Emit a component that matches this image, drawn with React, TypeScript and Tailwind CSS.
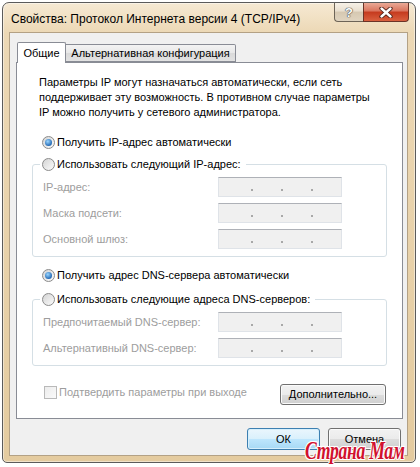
import React from "react";

function Radio({ checked }: { checked?: boolean }) {
  return (
    <span className="w-[13px] h-[13px] rounded-full border border-[#8b8b8b] bg-[linear-gradient(135deg,#d4d4d4,#fbfbfb)] flex items-center justify-center shrink-0">
      {checked && (
        <span className="w-[7px] h-[7px] rounded-full bg-[radial-gradient(circle_at_40%_35%,#9ad6ff,#1d63b0_75%)]" />
      )}
    </span>
  );
}

function IpBox() {
  return (
    <div className="w-[124px] h-[20px] border border-[#dfe3e8] border-t-[#aeb1b7] bg-[#f0f0f0] flex items-center pl-[32px] gap-[28px]">
      <span className="w-[2px] h-[2px] bg-[#a8a8a8] mt-[6px]" />
      <span className="w-[2px] h-[2px] bg-[#a8a8a8] mt-[6px]" />
      <span className="w-[2px] h-[2px] bg-[#a8a8a8] mt-[6px]" />
    </div>
  );
}

function FieldRow({ label }: { label: string }) {
  return (
    <div className="flex items-center h-[20px]">
      <span className="w-[175px] text-[#9d9d9d] whitespace-nowrap">{label}</span>
      <IpBox />
    </div>
  );
}

function Group({ legend, rows }: { legend: string; rows: string[] }) {
  return (
    <fieldset className="mx-[15px] border border-[#d5dfe5] rounded-[3px]">
      <legend className="ml-[7px] pl-[2px] pr-[5px]">
        <div className="flex items-center h-[20px] gap-[2px] whitespace-nowrap">
          <Radio />
          <span>{legend}</span>
        </div>
      </legend>
      <div className="pt-[3px] pb-[7px] pl-[10px] flex flex-col gap-[6px]">
        {rows.map((r) => (
          <FieldRow key={r} label={r} />
        ))}
      </div>
    </fieldset>
  );
}

function Btn({
  children,
  primary,
  className,
}: {
  children: React.ReactNode;
  primary?: boolean;
  className?: string;
}) {
  const base =
    "rounded-[3px] border flex items-center justify-center text-black whitespace-nowrap ";
  const look = primary
    ? "border-[#3c7fb1] bg-[linear-gradient(#eaf6fd_0%,#d9f0fc_50%,#bee6fd_50%,#a7d9f5_100%)] shadow-[inset_0_0_0_1px_#d6effc]"
    : "border-[#707070] bg-[linear-gradient(#f2f2f2_0%,#ebebeb_50%,#dddddd_50%,#cfcfcf_100%)] shadow-[inset_0_0_0_1px_#fbfbfb]";
  return <div className={base + look + " " + (className ?? "")}>{children}</div>;
}

export default function App() {
  return (
    <div className="relative w-[420px] h-[467px] overflow-hidden bg-white pt-[2px] pl-[2px] font-['Liberation_Sans',Arial,sans-serif] text-[11px] leading-[15px] text-black">
      <div className="w-[414px] h-[461px] rounded-t-[7px] rounded-b-[5px] border border-[#5b5b5b] bg-[linear-gradient(#f6e9d3_0px,#ecd8b5_30px,#e4cb9f_100%)] shadow-[inset_0_0_0_1px_rgba(255,255,255,0.45)] flex flex-col">
        {/* title bar */}
        <div className="h-[29px] flex justify-between pl-[8px] pr-[6px]">
          <div className="pt-[9px] text-[12px] text-black whitespace-nowrap">
            Свойства: Протокол Интернета версии 4 (TCP/IPv4)
          </div>
          <div className="flex items-start">
            <div className="w-[29px] h-[19px] rounded-bl-[4px] border border-[#6d6457] border-t-0 border-r-0 bg-[linear-gradient(#f7f1e7,#e9dfcf_45%,#d6c8b1_50%,#e0d4c0)] flex items-center justify-center text-white font-bold text-[13px] [text-shadow:0_0_1px_#444,0_0_1px_#444,0_0_1px_#444]">
              ?
            </div>
            <div className="w-[46px] h-[19px] rounded-br-[4px] border border-[#6b3327] border-t-0 bg-[linear-gradient(#eaa996,#d9745d_45%,#c53a1e_50%,#d9603f)] flex items-center justify-center">
              <svg width="14" height="11" viewBox="0 0 14 11">
                <path d="M2.5 1.5 L11.5 9.5 M11.5 1.5 L2.5 9.5" stroke="#4a1d14" strokeWidth="4.2" strokeLinecap="round" />
                <path d="M2.5 1.5 L11.5 9.5 M11.5 1.5 L2.5 9.5" stroke="#ffffff" strokeWidth="2.4" strokeLinecap="round" />
              </svg>
            </div>
          </div>
        </div>

        {/* content */}
        <div className="ml-[6px] mr-[7px] mb-[6px] flex-1 border border-[#b3a185] bg-[#f0f0f0] pt-[9px] pl-[6px] pr-[4px] pb-[5px] flex flex-col">
          {/* tabs */}
          <div className="h-[20px] flex items-end pl-[1px] relative z-10 whitespace-nowrap">
            <div className="w-[49px] h-[21px] -mb-px bg-white border border-[#898c95] border-b-0 rounded-t-[2px] flex items-center justify-center">
              Общие
            </div>
            <div className="w-[170px] h-[18px] border border-l-0 border-[#898c95] bg-[linear-gradient(#f3f3f3,#e8e8e8_50%,#d9d9d9_50%,#e2e2e2)] rounded-tr-[2px] flex items-center justify-center">
              Альтернативная конфигурация
            </div>
          </div>

          {/* panel */}
          <div className="h-[357px] bg-white border border-[#898c95] flex flex-col">
            <p className="pt-[12px] pl-[22px] whitespace-nowrap">
              Параметры IP могут назначаться автоматически, если сеть
              <br />
              поддерживает эту возможность. В противном случае параметры
              <br />
              IP можно получить у сетевого администратора.
            </p>

            <div className="mt-[12px] pl-[25px] h-[20px] flex items-center gap-[2px]">
              <Radio checked />
              <span>Получить IP-адрес автоматически</span>
            </div>

            <div className="mt-[2px]">
              <Group
                legend="Использовать следующий IP-адрес:"
                rows={["IP-адрес:", "Маска подсети:", "Основной шлюз:"]}
              />
            </div>

            <div className="mt-[8px] pl-[25px] h-[20px] flex items-center gap-[2px]">
              <Radio checked />
              <span>Получить адрес DNS-сервера автоматически</span>
            </div>

            <div className="mt-[4px]">
              <Group
                legend="Использовать следующие адреса DNS-серверов:"
                rows={["Предпочитаемый DNS-сервер:", "Альтернативный DNS-сервер:"]}
              />
            </div>

            <div className="mt-[18px] flex items-start justify-between pl-[27px] pr-[16px]">
              <div className="h-[16px] flex items-center gap-[2px] text-[#9d9d9d] whitespace-nowrap">
                <span className="w-[13px] h-[13px] border border-[#b9b9b9] bg-[linear-gradient(135deg,#ececec,#fafafa)]" />
                <span>Подтвердить параметры при выходе</span>
              </div>
              <Btn className="w-[106px] h-[21px]">Дополнительно...</Btn>
            </div>
          </div>

          {/* bottom buttons */}
          <div className="mt-[9px] flex justify-end gap-[8px] pr-[2px]">
            <Btn primary className="w-[73px] h-[22px]">
              ОК
            </Btn>
            <Btn className="w-[73px] h-[22px]">Отмена</Btn>
          </div>
        </div>
      </div>

      {/* watermark */}
      <div className="absolute left-[305px] top-[436px] origin-left scale-x-[0.68] whitespace-nowrap font-['Liberation_Serif',serif] italic font-bold text-[26px] leading-[30px] tracking-[-0.5px] text-[#d1112e] [text-shadow:1px_1px_0_#fff,-1px_-1px_0_#fff,1px_-1px_0_#fff,-1px_1px_0_#fff,0_1px_0_#fff,0_-1px_0_#fff,1px_0_0_#fff,-1px_0_0_#fff]">
        Страна Мам
      </div>
    </div>
  );
}
